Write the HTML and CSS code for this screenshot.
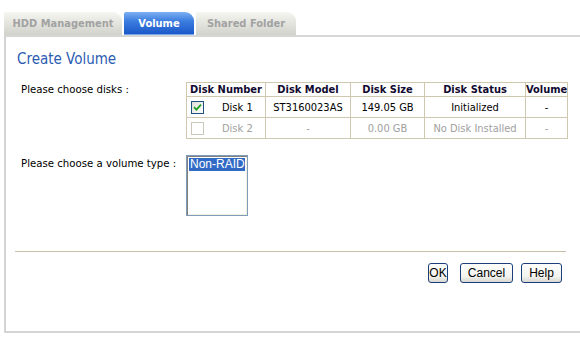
FILE: index.html
```html
<!DOCTYPE html>
<html lang="en">
<head>
    <meta charset="UTF-8">
    <title>Volume</title>
    <link rel="stylesheet" href="styles.css">
</head>
<body>

    <!-- Tabs -->
    <div class="tabs">
        <div class="tab tab-hdd">HDD Management</div>
        <div class="tab tab-active">Volume</div>
        <div class="tab tab-share">Shared Folder</div>
    </div>

    <div class="panel">
        <h1 class="title">Create Volume</h1>

        <div class="field">
            <div class="label">Please choose disks :</div>
            <table class="disks">
                <colgroup>
                    <col class="c-num">
                    <col class="c-model">
                    <col class="c-size">
                    <col class="c-status">
                    <col class="c-vol">
                </colgroup>
                <tr>
                    <th>Disk Number</th>
                    <th>Disk Model</th>
                    <th>Disk Size</th>
                    <th>Disk Status</th>
                    <th>Volume</th>
                </tr>
                <tr>
                    <td class="num">
                        <span class="check checked">
                            <svg width="9" height="9" viewBox="0 0 9 9"><path d="M1 4.2 L3.4 6.6 L8 1.6" fill="none" stroke="#21a121" stroke-width="1.8"/></svg>
                        </span>Disk 1
                    </td>
                    <td>ST3160023AS</td>
                    <td>149.05 GB</td>
                    <td>Initialized</td>
                    <td>-</td>
                </tr>
                <tr class="off">
                    <td class="num"><span class="check"></span>Disk 2</td>
                    <td>-</td>
                    <td>0.00 GB</td>
                    <td>No Disk Installed</td>
                    <td>-</td>
                </tr>
            </table>
        </div>

        <div class="field field-type">
            <div class="label">Please choose a volume type :</div>
            <div class="listbox" role="listbox">
                <div class="option selected" role="option">Non-RAID</div>
            </div>
        </div>

        <hr class="rule">

        <div class="actions">
            <button class="btn btn-ok">OK</button>
            <button class="btn btn-cancel">Cancel</button>
            <button class="btn btn-help">Help</button>
        </div>
    </div>

</body>
</html>
```

FILE: styles.css
```css
body {
    margin: 0;
    background: #fff;
    font-family: "DejaVu Sans Condensed", "DejaVu Sans", sans-serif;
    font-size: 11px;
    color: #000;
}

/* Tabs */
.tabs {
    display: flex;
    gap: 2px;
    padding: 12px 0 0 4px;
    height: 23px;
}

.tab {
    box-sizing: border-box;
    height: 23px;
    line-height: 24px;
    text-align: center;
    white-space: nowrap;
    font-weight: bold;
    color: #a2a2a2;
    background: linear-gradient(#f6f6f2, #e4e4de 50%, #d2d2cc);
    border-radius: 2px 9px 0 0;
}

.tab-hdd {
    width: 118px;
    border-radius: 0 9px 0 0;
}

.tab-share {
    width: 100px;
}

.tab-active {
    width: 70px;
    color: #fff;
    background: linear-gradient(#7db0f2, #3d7ee0 40%, #1b58c9);
    border-bottom: 1px dotted #6f9ee6;
}

/* Panel */
.panel {
    border-top: 2px solid #d6d6d6;
    border-left: 2px solid #d4d4d4;
    border-bottom: 2px solid #d4d4d4;
    margin-left: 4px;
    height: 281px;
    padding: 13px 0 0 11px;
}

.title {
    margin: 0 0 14px;
    font-size: 15px;
    line-height: 18px;
    font-weight: normal;
    color: #2c5db2;
}

.field {
    display: grid;
    grid-template-columns: 169px auto;
    align-items: start;
}

.label {
    padding: 1px 0 0 4px;
    line-height: 14px;
    font-size: 11.3px;
}

.field-type {
    margin-top: 16px;
}

.field-type .label {
    padding-top: 2px;
}

/* Disk table */
.disks {
    table-layout: fixed;
    width: 381px;
    border-collapse: collapse;
    border: 1px solid #a8a290;
}

.c-num { width: 79px; }
.c-model { width: 85px; }
.c-size { width: 74px; }
.c-status { width: 101px; }
.c-vol { width: 42px; }

.disks th,
.disks td {
    border: 1px solid #cfc7ae;
    text-align: center;
    padding: 0;
    white-space: nowrap;
}

.disks th {
    height: 13px;
    line-height: 13px;
    font-weight: bold;
    color: #120a30;
}

.disks td {
    height: 20px;
}

.disks td.num {
    text-align: left;
    padding-left: 4px;
}

.check {
    display: inline-block;
    box-sizing: border-box;
    width: 13px;
    height: 13px;
    border: 1px solid #cac8bb;
    background: #fff;
    vertical-align: -3px;
    margin-right: 18px;
    position: relative;
}

.check.checked {
    border-color: #1c5180;
    background: linear-gradient(135deg, #dcdcd7, #fff);
}

.check svg {
    position: absolute;
    left: 1px;
    top: 1px;
}

.off td {
    color: #a0a0a0;
}

/* Volume type list */
.listbox {
    box-sizing: border-box;
    width: 62px;
    height: 61px;
    border: 1px solid #7f9db9;
    box-shadow: inset 1px 1px 0 #808080, inset -1px -1px 0 #f1efe2;
    padding: 2px;
    font-family: "Liberation Sans", sans-serif;
    font-size: 12px;
}

.option {
    line-height: 13px;
    padding-left: 1px;
}

.option.selected {
    background: #316ac5;
    color: #fff;
}

/* Footer */
.rule {
    margin: 35px 14px 0 -2px;
    border: 0;
    border-top: 1px solid #c6bfa8;
    height: 0;
}

.actions {
    display: flex;
    justify-content: flex-end;
    margin: 11px 18px 0 0;
}

.btn {
    box-sizing: border-box;
    height: 20px;
    padding: 0;
    border: 1px solid #1c3f7c;
    border-radius: 3px;
    background: linear-gradient(#ffffff, #f2f2ee 70%, #d8d8d0);
    font-family: "Liberation Sans", sans-serif;
    font-size: 12px;
    color: #000;
}

.btn-ok { width: 20px; }
.btn-cancel { width: 53px; margin-left: 12px; }
.btn-help { width: 41px; margin-left: 8px; }
```
